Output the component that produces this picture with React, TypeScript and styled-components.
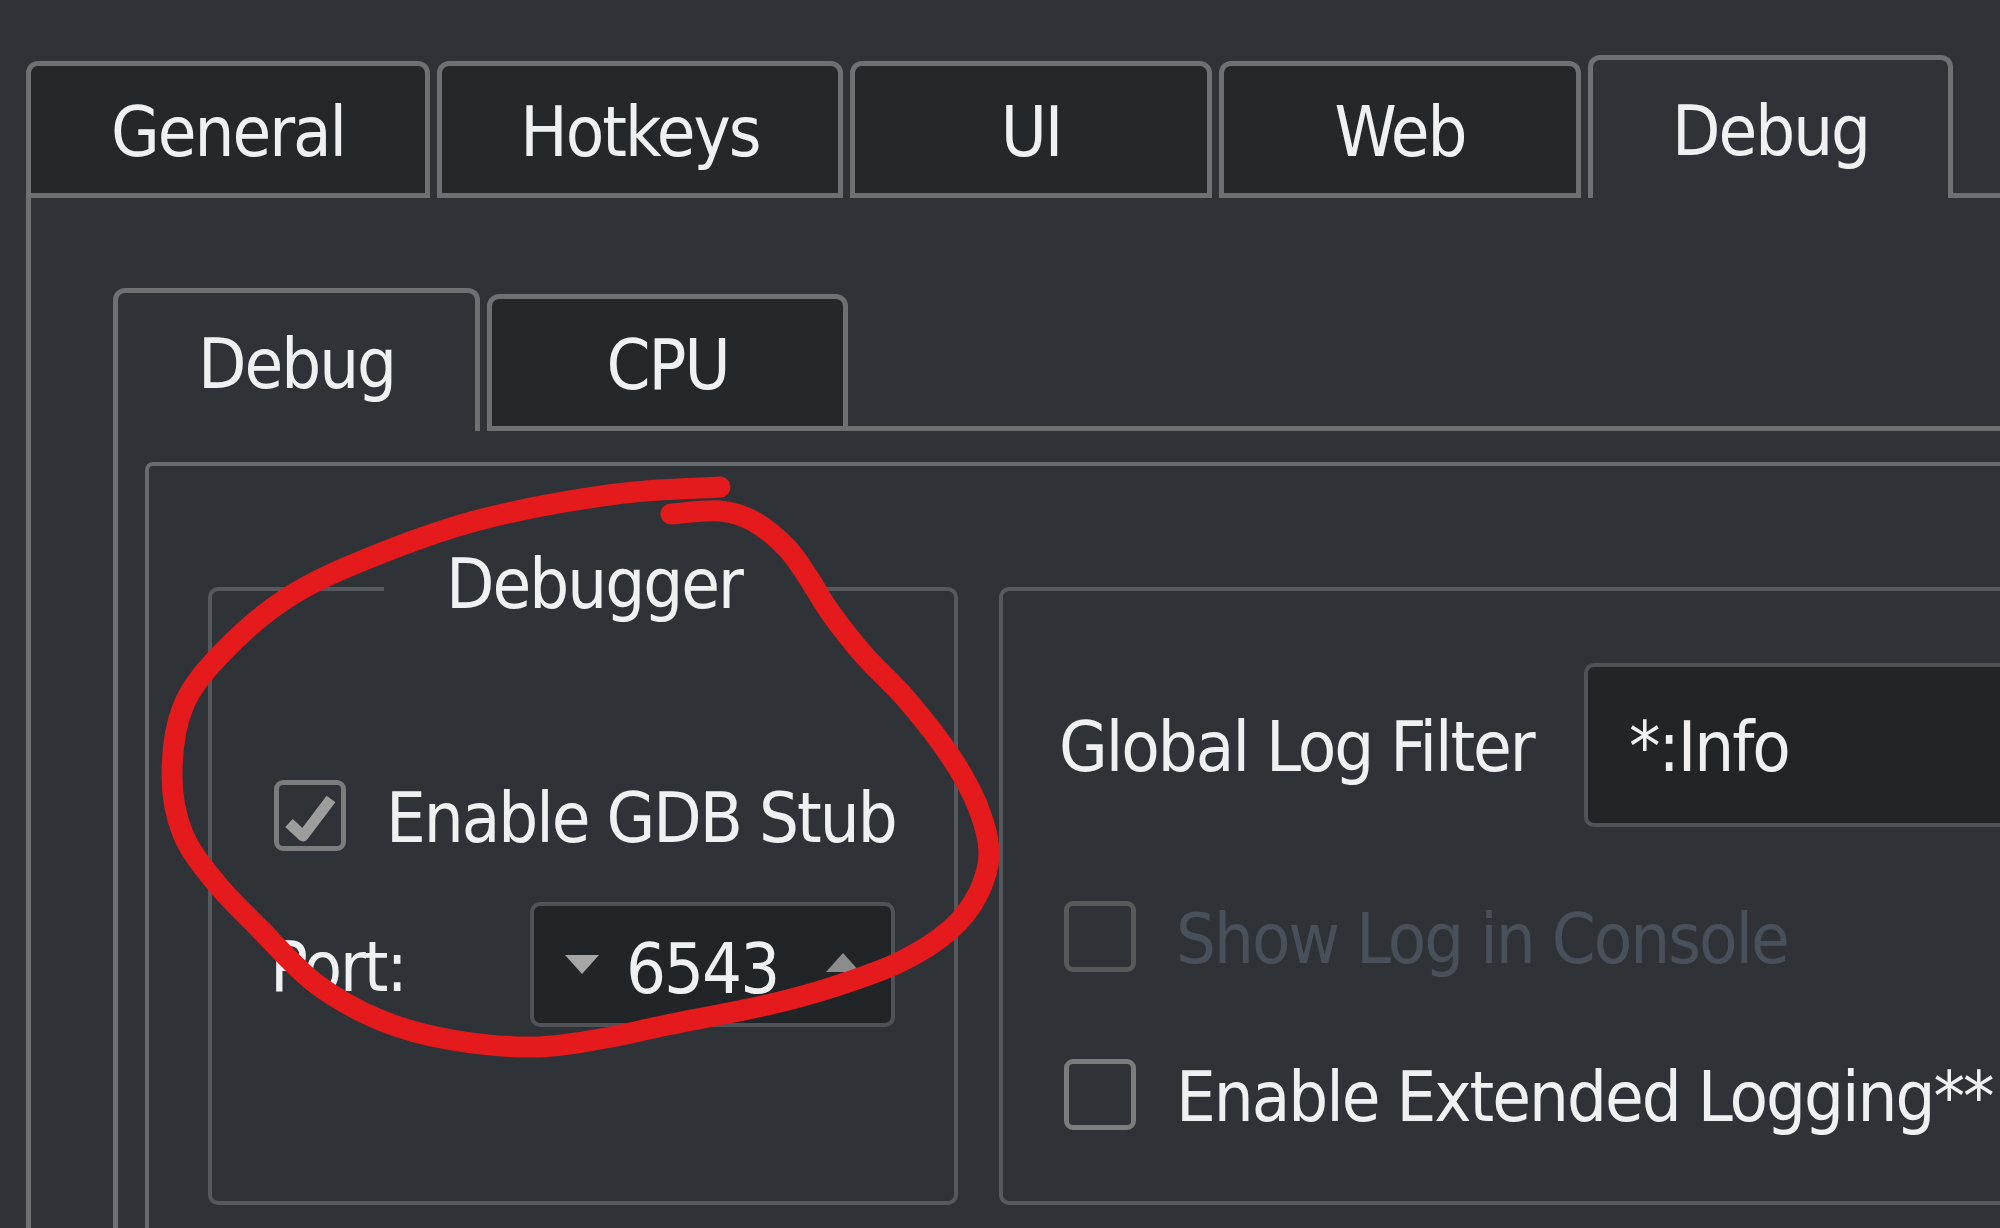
import React from "react";
import styled, { createGlobalStyle } from "styled-components";

const BG = "#2f3337";
const TAB_BORDER = "#6e7174";
const BOX_BORDER = "#55595d";
const FIELD_BG = "#222528";
const FIELD_BORDER = "#4f5357";
const TEXT = "#eef0f1";

const GlobalStyle = createGlobalStyle`
  html, body { margin: 0; padding: 0; background: ${BG}; }
  #root { width: 2000px; height: 1228px; }
`;

const Page = styled.div`
  position: relative;
  width: 2000px;
  height: 1228px;
  overflow: hidden;
  box-sizing: border-box;
  padding: 55px 0 0 26px;
  display: flex;
  flex-direction: column;
  background: ${BG};
  color: ${TEXT};
  font-family: "DejaVu Sans Condensed", "DejaVu Sans", sans-serif;
  font-stretch: semi-condensed;
  font-size: 70px;
  letter-spacing: -2px;
  line-height: normal;
`;

const TabBar = styled.div`
  display: flex;
  align-items: flex-end;
  flex-shrink: 0;
`;

const Tab = styled.div<{ $w: number; $selected?: boolean }>`
  box-sizing: border-box;
  width: ${(p) => p.$w}px;
  height: ${(p) => (p.$selected ? 143 : 137)}px;
  display: flex;
  align-items: center;
  justify-content: center;
  padding-top: 4px;
  border: 5px solid ${TAB_BORDER};
  border-bottom: ${(p) => (p.$selected ? "none" : `5px solid ${TAB_BORDER}`)};
  border-radius: 12px 12px 0 0;
  background: ${(p) => (p.$selected ? BG : "#25282b")};
  white-space: nowrap;
  & + & {
    margin-left: 7px;
  }
`;

const TabFill = styled.div`
  flex: 1;
  height: 0;
  border-bottom: 5px solid ${TAB_BORDER};
`;

const Pane = styled.div<{ $padTop: number; $padLeft: number }>`
  flex: 1;
  display: flex;
  flex-direction: column;
  border-left: 5px solid ${TAB_BORDER};
  padding: ${(p) => p.$padTop}px 0 0 ${(p) => p.$padLeft}px;
  min-width: 0;
`;

const Frame = styled.div`
  flex: 1;
  display: flex;
  align-items: flex-start;
  gap: 41px;
  border-top: 4px solid #686b6e;
  border-left: 4px solid #686b6e;
  border-top-left-radius: 8px;
  padding: 121px 0 0 59px;
`;

const GroupBox = styled.div<{ $w: number }>`
  box-sizing: border-box;
  flex-shrink: 0;
  width: ${(p) => p.$w}px;
  height: 618px;
  border: 4px solid ${BOX_BORDER};
  border-radius: 10px;
  display: flex;
  flex-direction: column;
`;

const GroupTitle = styled.div`
  align-self: center;
  margin: -45px 0 0 22px;
  padding: 0 62px;
  line-height: 76px;
  background: ${BG};
  white-space: nowrap;
`;

const GroupBody = styled.div<{ $padTop: number; $padLeft: number }>`
  display: flex;
  flex-direction: column;
  padding: ${(p) => p.$padTop}px 0 0 ${(p) => p.$padLeft}px;
`;

const Row = styled.div<{ $top: number; $h: number; $indent?: number }>`
  display: flex;
  align-items: center;
  height: ${(p) => p.$h}px;
  margin-top: ${(p) => p.$top}px;
  margin-left: ${(p) => p.$indent ?? 0}px;
  white-space: nowrap;
`;

const Label = styled.span<{ $w?: number; $disabled?: boolean }>`
  display: inline-block;
  flex-shrink: 0;
  width: ${(p) => (p.$w ? `${p.$w}px` : "auto")};
  padding-top: 4px;
  color: ${(p) => (p.$disabled ? "#49505a" : TEXT)};
`;

const CheckBox = styled.div<{ $disabled?: boolean }>`
  box-sizing: border-box;
  flex-shrink: 0;
  width: 72px;
  height: 71px;
  margin-right: 40px;
  border: 5px solid ${(p) => (p.$disabled ? "#58595b" : "#7b7c7e")};
  border-radius: 9px;
  display: flex;
  align-items: center;
  justify-content: center;
`;

const SpinBox = styled.div`
  box-sizing: border-box;
  width: 365px;
  height: 125px;
  display: flex;
  align-items: center;
  padding: 0 30px 0 30px;
  background: ${FIELD_BG};
  border: 4px solid ${FIELD_BORDER};
  border-radius: 10px;
`;

const SpinValue = styled.span`
  flex: 1;
  margin: 8px 0 0 26px;
`;

const LineEdit = styled.div`
  box-sizing: border-box;
  flex-shrink: 0;
  width: 900px;
  height: 164px;
  display: flex;
  align-items: center;
  padding: 4px 0 0 41px;
  background: ${FIELD_BG};
  border: 4px solid ${FIELD_BORDER};
  border-radius: 10px;
`;

const Annotation = styled.svg`
  position: absolute;
  left: 0;
  top: 0;
  width: 2000px;
  height: 1228px;
  pointer-events: none;
`;

const Arrow = ({ up, color }: { up?: boolean; color: string }) => (
  <svg width="36" height="21" viewBox="0 0 36 21" style={{ flexShrink: 0, marginTop: up ? -4 : 0 }}>
    <polygon points={up ? "18,1 35,20 1,20" : "1,1 35,1 18,20"} fill={color} />
  </svg>
);

const CheckMark = () => (
  <svg width="58" height="58" viewBox="0 0 58 58">
    <path
      d="M8 36 L22 49 L50 12"
      fill="none"
      stroke="#9d9d9d"
      strokeWidth="11"
      strokeLinejoin="round"
    />
  </svg>
);

const pts: [number, number][] = [
  [720, 487], [616, 494], [479, 520], [369, 558], [287, 598], [221, 654],
  [183, 707], [172, 776], [183, 834], [216, 883], [260, 929], [315, 983],
  [380, 1020], [452, 1040], [534, 1047], [600, 1039], [667, 1025], [767, 1005],
  [833, 987], [900, 962], [950, 930], [978, 894], [989, 853], [978, 807],
  [951, 757], [907, 700], [863, 654], [830, 612], [808, 577], [786, 547],
  [753, 521], [720, 511], [671, 514],
];

function smoothPath(p: [number, number][]): string {
  let d = `M${p[0][0]} ${p[0][1]}`;
  for (let i = 0; i < p.length - 1; i++) {
    const p0 = p[i - 1] || p[i];
    const p1 = p[i];
    const p2 = p[i + 1];
    const p3 = p[i + 2] || p2;
    const c1x = p1[0] + (p2[0] - p0[0]) / 6;
    const c1y = p1[1] + (p2[1] - p0[1]) / 6;
    const c2x = p2[0] - (p3[0] - p1[0]) / 6;
    const c2y = p2[1] - (p3[1] - p1[1]) / 6;
    d += ` C${c1x.toFixed(1)} ${c1y.toFixed(1)} ${c2x.toFixed(1)} ${c2y.toFixed(1)} ${p2[0]} ${p2[1]}`;
  }
  return d;
}

const circlePath = smoothPath(pts);

export default function App() {
  return (
    <>
      <GlobalStyle />
      <Page>
        <TabBar>
          <Tab $w={404}>General</Tab>
          <Tab $w={406}>Hotkeys</Tab>
          <Tab $w={362}>UI</Tab>
          <Tab $w={362}>Web</Tab>
          <Tab $w={365} $selected>Debug</Tab>
          <TabFill />
        </TabBar>
        <Pane $padTop={90} $padLeft={82}>
          <TabBar>
            <Tab $w={367} $selected>Debug</Tab>
            <Tab $w={361}>CPU</Tab>
            <TabFill />
          </TabBar>
          <Pane $padTop={31} $padLeft={27}>
            <Frame>
              <GroupBox $w={750}>
                <GroupTitle>Debugger</GroupTitle>
                <GroupBody $padTop={158} $padLeft={58}>
                  <Row $top={0} $h={71} $indent={4}>
                    <CheckBox>
                      <CheckMark />
                    </CheckBox>
                    <Label>Enable GDB Stub</Label>
                  </Row>
                  <Row $top={51} $h={125}>
                    <Label $w={260}>Port:</Label>
                    <SpinBox>
                      <Arrow color="#a6a6a6" />
                      <SpinValue>6543</SpinValue>
                      <Arrow up color="#8c8c8c" />
                    </SpinBox>
                  </Row>
                </GroupBody>
              </GroupBox>
              <GroupBox $w={1300}>
                <GroupBody $padTop={72} $padLeft={56}>
                  <Row $top={0} $h={164}>
                    <Label $w={525}>Global Log Filter</Label>
                    <LineEdit>*:Info</LineEdit>
                  </Row>
                  <Row $top={74} $h={71} $indent={5}>
                    <CheckBox $disabled />
                    <Label $disabled>Show Log in Console</Label>
                  </Row>
                  <Row $top={87} $h={71} $indent={5}>
                    <CheckBox />
                    <Label>Enable Extended Logging**</Label>
                  </Row>
                </GroupBody>
              </GroupBox>
            </Frame>
          </Pane>
        </Pane>
        <Annotation viewBox="0 0 2000 1228">
          <path
            d={circlePath}
            fill="none"
            stroke="#e41a1c"
            strokeWidth="21"
            strokeLinecap="round"
            strokeLinejoin="round"
          />
        </Annotation>
      </Page>
    </>
  );
}
